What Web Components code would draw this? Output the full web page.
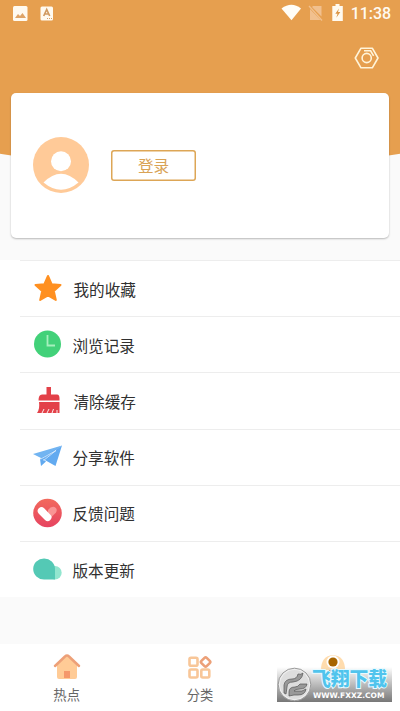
<!DOCTYPE html>
<html lang="zh-CN">
<head>
<meta charset="utf-8">
<title>我的</title>
<style>
body{margin:0;background:#fafafa;font-family:Roboto,"Noto Sans CJK SC",sans-serif}
</style>
</head>
<body>
<profile-page></profile-page>
<script>
const define=(name,html)=>customElements.define(name,class extends HTMLElement{
  constructor(){super();this.attachShadow({mode:'open'}).innerHTML=html}
});

define('status-bar',`<style>
:host{display:flex;height:27px;align-items:center;padding:0 9px 0 12px;color:#fffaf0;justify-content:space-between;box-sizing:border-box}
svg{display:block}div{display:flex;align-items:center}
time{font:500 16px/20px Roboto,sans-serif;letter-spacing:-.05px;margin-left:7px;padding-top:1px}
</style>
<div><svg width="44" height="27" viewBox="12 0 44 27"><rect x="13" y="6" width="14.5" height="15" rx="1.5" fill="#fffaf0"/><path d="M15 18l3-4 2 2 2.500-3 3.500 5z" fill="#dfa467"/><rect x="40.500" y="6.500" width="12.500" height="14" rx="1.500" fill="#fffaf0"/><path d="M43.700 16l3-6.500 3 6.500M44.800 14h3.800" fill="none" stroke="#d19a60" stroke-width="1.700"/><path d="M47 18.500h5" stroke="#dba065" stroke-dasharray="1 1"/></svg></div>
<div><svg width="64" height="27" viewBox="280 0 64 27"><path d="M281.500 8.500Q291.500 1 301 8.500L291.500 20.300z" fill="#fffdf7"/><path d="M313 6h8.500v10.500L312 7zM310 9l10.500 11H310z" fill="#f1c08e"/><path d="M309 6l13 14.500" stroke="#f1c08e" stroke-width="1.300"/><path d="M335.500 4h4v2h3.300v15h-10.500V6h3.200z" fill="#fffaf0"/><path d="M339 8.500l-3.700 5.300h2.200l-1.200 4 4-5.700H338z" fill="#dc9544"/></svg><time>11:38</time></div>`);

define('profile-hero',`<style>
:host{display:block;height:260px;background:#fafafa;background-image:radial-gradient(ellipse 400px 110px at 50% 59px,#e69f4f 99.2%,#fafafa 100%);background-repeat:no-repeat}
.settings{display:flex;justify-content:flex-end;height:66px;box-sizing:border-box;padding:19px 20px 0 0}
.card{display:flex;align-items:center;height:144.500px;margin:0 11px;box-sizing:border-box;padding-left:22px;background:#fff;border-radius:5px;box-shadow:0 1px 2px #0004}
button{margin:0 0 0 22px;width:85px;height:31px;box-sizing:border-box;padding:0;border:0;border-radius:3px;box-shadow:inset 0 0 0 1.500px #dda656;background:none;color:#d9a356;font:15.600px/31px "Noto Sans CJK SC",sans-serif}
svg{display:block}
</style>
<slot></slot>
<div class="settings"><svg width="26" height="24" viewBox="354 46 26 24" fill="none" stroke="#fff4d9" stroke-width="1.600"><path d="M361 48.200h11.300l5.700 9.800-5.700 9.800H361L355.300 58z" stroke-linejoin="round"/><circle cx="366.700" cy="58" r="4.600"/><path d="M364 50.800h6.600l3 5"/></svg></div>
<div class="card"><svg width="56" height="56" viewBox="0 0 56 56"><circle cx="28" cy="28" r="28" fill="#ffca98"/><circle cx="28" cy="24.200" r="10" fill="#fff"/><path d="M10.500 45.500Q28 28 45.500 45.500Q28 60 10.500 45.500z" fill="#fff"/></svg><button>登录</button></div>`);

define('menu-row',`<style>
:host{display:flex;height:56.200px;box-sizing:border-box;align-items:center;padding-left:32px;background:linear-gradient(#ededed,#ededed) 20px 0/100% 1px no-repeat #fff;color:#303030;font:15.600px/24px "Noto Sans CJK SC",sans-serif}
.icon{width:40.500px;height:32px;flex:none}.label{padding-top:1px;margin-left:var(--nudge,0)}
::slotted(svg){display:block}
</style><div class="icon"><slot name="icon"></slot></div><div class="label"><slot></slot></div>`);

define('nav-tab',`<style>
:host{display:flex;flex:1;flex-direction:column;align-items:center;padding-top:8px;color:#666;font:13.300px/20px "Noto Sans CJK SC",sans-serif}
::slotted(svg){display:block;margin-bottom:2.500px}
</style><slot name="icon"></slot><span><slot></slot></span>`);

define('site-watermark',`<style>
:host{position:absolute;left:277px;top:23px;width:115px;height:35px;background:linear-gradient(#fff0 0,#bbb9 30%,#777 100%);color:#fff}
svg{position:absolute;left:0;top:0}
b{position:absolute;left:35px;top:0;font:900 18.800px/22px "Noto Sans CJK SC",sans-serif;white-space:nowrap;color:#50c4ed;-webkit-text-stroke:2px #e8faff;paint-order:stroke fill}
small{position:absolute;left:36px;top:24px;font:bold 7.500px/10px "DejaVu Sans",sans-serif;white-space:nowrap}
</style><svg width="35" height="35"><circle cx="17.500" cy="17.500" r="16.300" fill="#eee" stroke="#999"/><circle cx="17.500" cy="17.500" r="14.500" fill="#ddd"/><path d="M7 26V18Q8 12 15 12q5 0 6-5 3 1 5-1-1 8-10 9-6 0-6 5l-1 7zM12 29v-4q0-5 6-5 3 0 5-3h7q-1 5-7 5-5 0-6 2h8l4-2q-1 6-8 6h-4z" fill="#999" stroke="#555" stroke-width=".7"/></svg><b>飞翔下载</b><small>WWW.FXXZ.COM</small>`);

define('bottom-nav',`<style>
:host{position:relative;display:flex;height:67px;background:#fff}svg{display:block}
</style>
<nav-tab><svg slot="icon" width="30" height="30"  viewBox="52 652 30 30"><path d="M57 664l10-8 10 8v13q0 2-2 2H59q-2 0-2-2z" fill="#ffcb96"/><path d="M55 666l10-9.500q2-2 4 0l10 9.500" fill="none" stroke="#eda078" stroke-width="2.500" stroke-linecap="round" stroke-linejoin="round"/><path d="M64 671h6v7h-6z" fill="#f5986c"/></svg>热点</nav-tab>
<nav-tab><svg slot="icon" width="30" height="30" viewBox="185 652 30 30" fill="none" stroke="#f8c698" stroke-width="2.600"><rect x="189.500" y="657.800" width="8" height="8" rx="1.500"/><rect x="189.500" y="669.500" width="8" height="8" rx="1.500"/><rect x="201.300" y="669.500" width="8" height="8" rx="1.500"/><rect x="201.900" y="658.300" width="7.400" height="7.400" rx="1.500" transform="rotate(45 205.600 662)" stroke="#eca078"/></svg>分类</nav-tab>
<nav-tab><svg slot="icon" width="30" height="30" viewBox="318 652 30 30"><path d="M321 670q0-14 12-15 12 1 12 15" fill="#ffdcae"/><circle cx="333" cy="662" r="6.500" fill="#fff"/><circle cx="333" cy="662" r="4.600" fill="#a76500"/><path d="M325 674q8-10 16 0z" fill="#ad8750"/></svg></nav-tab>
<site-watermark></site-watermark>`);

define('profile-page',`<style>
:host{display:flex;flex-direction:column;height:711px;overflow:hidden;background:#fafafa}
main{display:flex;flex-direction:column;height:337.500px;flex:none}bottom-nav{margin-top:auto}
</style>
<profile-hero><status-bar></status-bar></profile-hero>
<main>
<menu-row style="--nudge:1px"><svg slot="icon" width="32" height="32"><path d="M16 4l3.600 8.200 8.900.8-6.700 6 2 8.900L16 23.300l-7.800 4.600 2-8.900-6.700-6 8.900-.8z" fill="#ff9021" stroke="#ff9021" stroke-width="2" stroke-linejoin="round"/></svg>我的收藏</menu-row>
<menu-row><svg slot="icon" width="32" height="32"><circle cx="15.500" cy="16" r="13.500" fill="#42d179"/><path d="M15.500 7v10.500H23" fill="none" stroke="#a6f0bd" stroke-width="1.800"/></svg>浏览记录</menu-row>
<menu-row style="--nudge:1px"><svg slot="icon" width="32" height="32" fill="#e34149"><path d="M14.500 3h4.500v7.500h6q2.500 0 2.500 4v2H6.500q0-6 3.500-6h4.500zM7 18h20.500v11H5q3-4 2-11z"/><path d="M10 29l2-4M15 29l2-4M20 29l1.500-4M25 29v-3" stroke="#fff" stroke-width=".9"/></svg>清除缓存</menu-row>
<menu-row><svg slot="icon" width="32" height="32"><path d="M1 13L30 4.500 11 18z" fill="#72b4f1"/><path d="M30 4.500L23.500 25 11 18z" fill="#62aaf0"/><path d="M8 18l1 7 5-4.500-3-2.200L30 4.500z" fill="#62aaf0"/><path d="M8.500 18.200L24 9.500 11.500 19.500" fill="none" stroke="#fff" stroke-width=".6"/></svg>分享软件</menu-row>
<menu-row><svg slot="icon" width="32" height="32"><defs><linearGradient id="red" x2="0" y2="1"><stop stop-color="#f26a5d"/><stop offset="1" stop-color="#e64360"/></linearGradient></defs><circle cx="15.500" cy="16" r="14.300" fill="url(#red)"/><path d="M16 23.500l8-8q2-4-1.500-5.500-3.500-1-6.500 3z" fill="#f99594"/><path d="M9.500 14l6.200 6.300" stroke="#fff" stroke-width="7.500" stroke-linecap="round"/></svg>反馈问题</menu-row>
<menu-row><svg slot="icon" width="32" height="32"><circle cx="23" cy="19.800" r="6.700" fill="#92e6cf"/><path d="M12 5.500a10.800 10.500 0 0 1 11 10.500v10.500H12A10.800 10.500 0 0 1 12 5.500z" fill="#54c9b5"/></svg>版本更新</menu-row>
</main>
<bottom-nav></bottom-nav>`);
</script>
</body>
</html>
